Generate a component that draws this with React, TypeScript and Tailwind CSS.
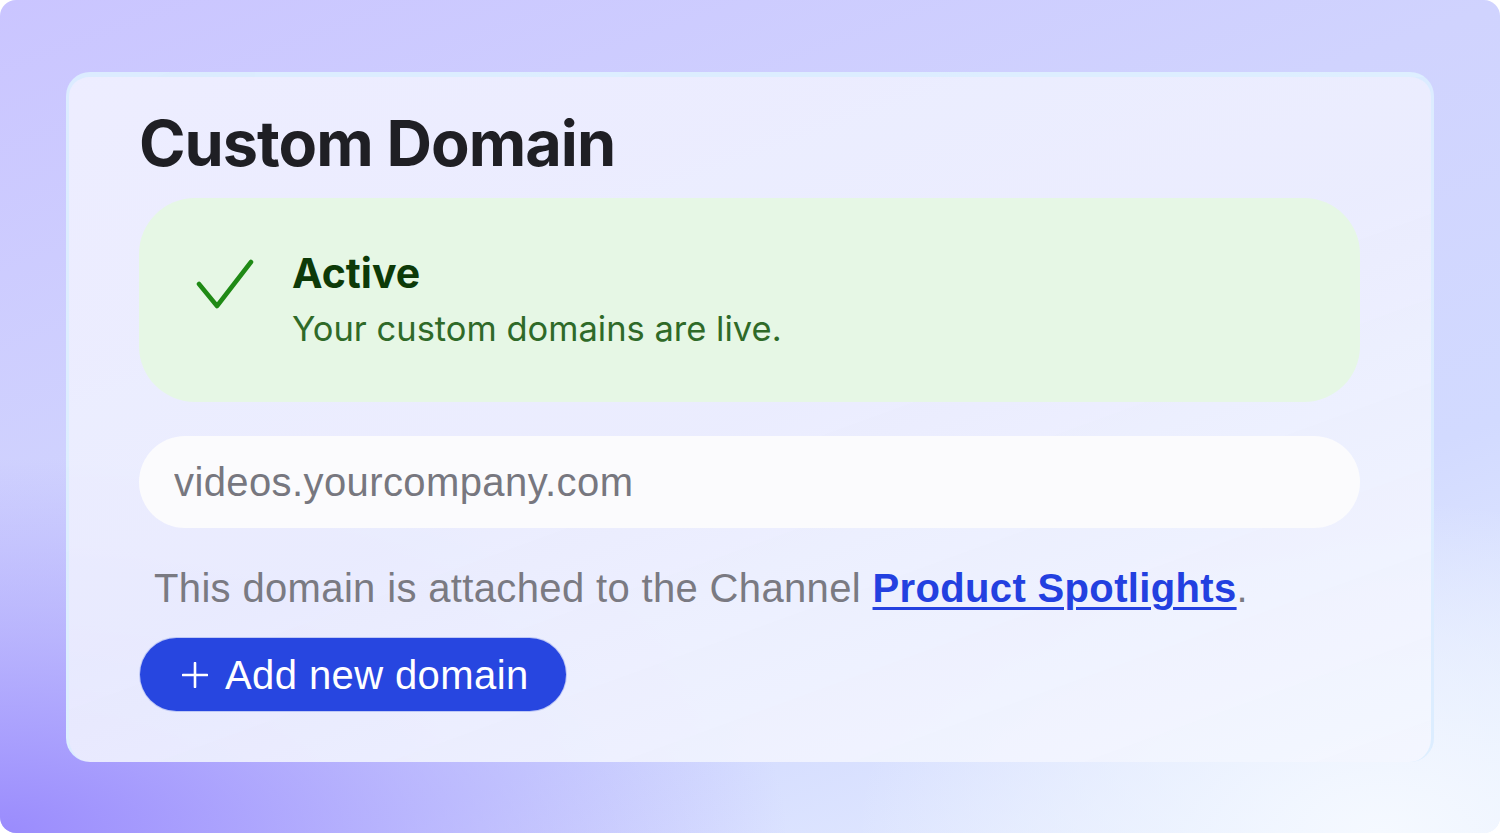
// Custom domain settings card on a soft gradient backdrop

function CheckMark() {
  return (
    <svg width="60" height="52" viewBox="0 0 60 52" fill="none" className="shrink-0">
      <polyline
        points="3,26 21,48 55,4"
        stroke="#1f8a15"
        strokeWidth="4.5"
        strokeLinecap="round"
        strokeLinejoin="round"
      />
    </svg>
  );
}

function PlusMark() {
  return (
    <svg width="26" height="26" viewBox="0 0 26 26" fill="none" className="shrink-0">
      <path d="M13 1v24M1 13h24" stroke="white" strokeWidth="2.6" strokeLinecap="round" />
    </svg>
  );
}

export default function App() {
  return (
    <div className="h-[833px] w-[1500px] bg-white">
      <div className="relative flex h-full w-full flex-col overflow-hidden rounded-2xl bg-[linear-gradient(160deg,#cac5ff_0%,#d0d3fe_40%,#d2daff_70%,#eaf1fe_100%)] px-[66px] pt-[72px]">
        {/* background glows */}
        <div className="pointer-events-none absolute inset-0 bg-[radial-gradient(ellipse_70%_60%_at_0%_100%,#9a8bfd_0%,rgba(170,160,253,0.6)_40%,rgba(200,200,254,0)_75%)]" />
        <div className="pointer-events-none absolute inset-0 bg-[radial-gradient(ellipse_35%_40%_at_92%_100%,#f5f9ff_0%,rgba(240,246,255,0.7)_40%,rgba(230,238,254,0)_100%)]" />

        <section className="relative flex h-[690px] flex-col rounded-[24px] border-t-[5px] border-l-[3px] border-r-[3px] border-[#d5ecff]/70 bg-[linear-gradient(160deg,rgba(240,240,255,0.92)_0%,rgba(236,238,254,0.92)_50%,rgba(243,246,255,0.95)_100%)] pl-[70px] pr-[71px] pt-[30px]">
          <h1 className="font-['Inter',sans-serif] text-[63px] font-bold leading-[72px] tracking-[-1px] text-[#1f1f24]">
            Custom Domain
          </h1>

          {/* status banner */}
          <div className="mt-[19px] flex h-[204px] items-start rounded-[56px] bg-[#e6f7e5] pl-[57px] pt-[60px]">
            <CheckMark />
            <div className="ml-[36px] -mt-[9px] flex flex-col">
              <span className="font-['Inter',sans-serif] text-[41px] font-bold leading-[48px] text-[#0d3a08]">
                Active
              </span>
              <span className="mt-[12px] font-['Inter',sans-serif] text-[34.5px] leading-[40px] text-[#2f6a28]">
                Your custom domains are live.
              </span>
            </div>
          </div>

          <input
            className="mt-[34px] h-[92px] w-full shrink-0 rounded-full bg-[#fbfbfd] px-[35px] font-['Liberation_Sans',Arial,sans-serif] text-[40px] tracking-[0.4px] text-[#2a2a30] placeholder:text-[#77777f] focus:outline-none"
            placeholder="videos.yourcompany.com"
            type="text"
          />

          <p className="mt-[38px] pl-[15px] font-['Liberation_Sans',Arial,sans-serif] text-[40px] leading-[44px] tracking-[0.35px] text-[#7a7a82]">
            This domain is attached to the Channel{' '}
            <a href="#" className="font-bold text-[#2340e0] underline decoration-[3px] underline-offset-[5px]">
              Product Spotlights
            </a>
            .
          </p>

          <button
            type="button"
            className="mt-[27px] flex h-[75px] w-[428px] shrink-0 items-center gap-[17px] rounded-full border border-white/70 bg-[#2746e0] pl-[42px] font-['Liberation_Sans',Arial,sans-serif] text-[40px] tracking-[0.4px] text-white"
          >
            <PlusMark />
            Add new domain
          </button>
        </section>
      </div>
    </div>
  );
}
